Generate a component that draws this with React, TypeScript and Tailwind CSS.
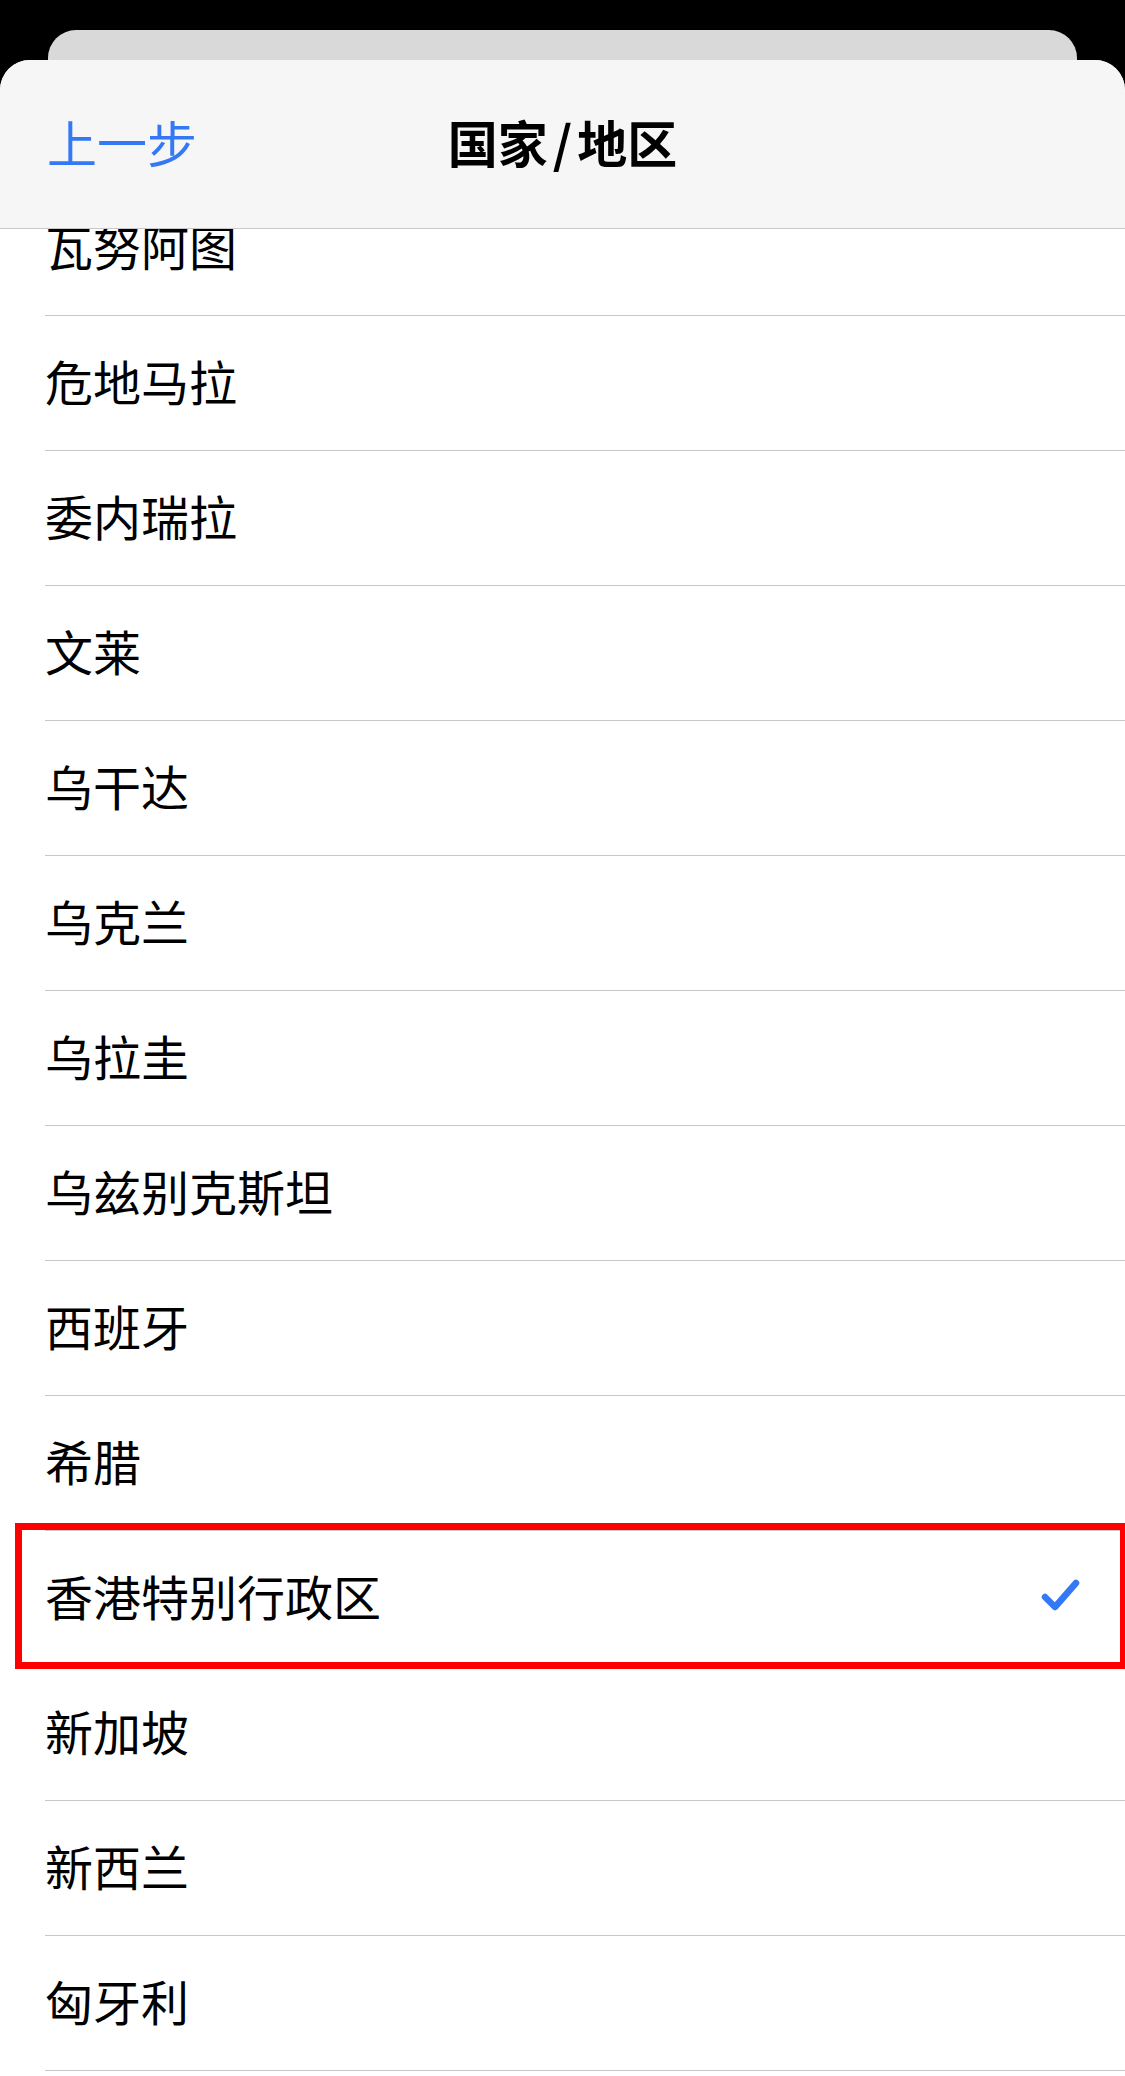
const countries = [
  '瓦努阿图',
  '危地马拉',
  '委内瑞拉',
  '文莱',
  '乌干达',
  '乌克兰',
  '乌拉圭',
  '乌兹别克斯坦',
  '西班牙',
  '希腊',
  '香港特别行政区',
  '新加坡',
  '新西兰',
  '匈牙利',
];

const selected = '香港特别行政区';

function Check() {
  return (
    <svg width="40" height="34" viewBox="0 0 40 34" fill="none">
      <path
        d="M5 19 L15 29 L36 5"
        stroke="#3478f6"
        strokeWidth="6.5"
        strokeLinecap="round"
        strokeLinejoin="round"
      />
    </svg>
  );
}

export default function App() {
  return (
    <div className="min-h-[2076px] bg-black pt-[30px] flex flex-col font-['Noto_Sans_CJK_SC',sans-serif]">
      {/* card peeking behind */}
      <div className="mx-[48px] h-[30px] shrink-0 rounded-t-[28px] bg-[#d9d9d9]" />

      {/* Sheet */}
      <div className="flex-1 flex flex-col bg-white rounded-t-[30px] overflow-hidden">
        {/* Header */}
        <header className="relative z-10 h-[169px] shrink-0 grid grid-cols-[1fr_auto_1fr] items-center pb-[6px] bg-[#f6f6f6] border-b border-[#c8c8c8]">
          <button className="justify-self-start pl-[47px] text-[50px] leading-none text-[#3478f6]">
            上一步
          </button>
          <h1 className="text-[50px] leading-none font-bold text-black">
            国家<span className="mx-[5px]">/</span>地区
          </h1>
          <div />
        </header>

        {/* List */}
        <div className="flex-1 overflow-hidden">
          <ul className="-mt-[48px] pl-[45px]">
            {countries.map((name) => (
              <li
                key={name}
                className="relative h-[135px] flex items-center justify-between pr-[45px] pb-[6px] border-b border-[#c8c8c8]"
              >
                <span className="text-[48px] leading-none text-black">{name}</span>
                {name === selected && (
                  <>
                    <Check />
                    <div className="absolute -top-[8px] -left-[30px] -right-[2px] -bottom-[4px] border-[7px] border-[#ff0000] pointer-events-none" />
                  </>
                )}
              </li>
            ))}
          </ul>
        </div>
      </div>
    </div>
  );
}
